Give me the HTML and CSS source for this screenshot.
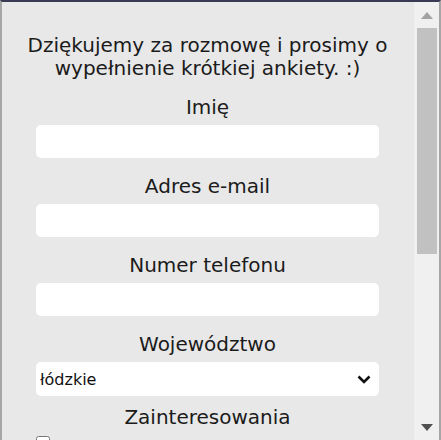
FILE: index.html
```html
<!DOCTYPE html>
<html lang="pl">
<head>
<meta charset="utf-8">
<title>Ankieta</title>
<link rel="stylesheet" href="styles.css">
</head>
<body>
<div class="frame">
  <div class="content">
    <p class="intro">Dziękujemy za rozmowę i prosimy o wypełnienie krótkiej ankiety. :)</p>
    <form class="form">
      <label class="label" for="imie">Imię</label>
      <input class="field" id="imie" type="text">
      <label class="label" for="email">Adres e-mail</label>
      <input class="field" id="email" type="email">
      <label class="label" for="tel">Numer telefonu</label>
      <input class="field" id="tel" type="tel">
      <label class="label" for="woj">Województwo</label>
      <div class="select-wrap">
        <select class="select" id="woj">
          <option>łódzkie</option>
        </select>
        <svg class="chevron" width="14" height="9" viewBox="0 0 14 9"><path d="M1.5 1.5 L7 7 L12.5 1.5" fill="none" stroke="#111" stroke-width="2.6"/></svg>
      </div>
      <div class="label label-group">Zainteresowania</div>
      <div class="checks">
        <input type="checkbox" class="box" aria-label="Sport">
      </div>
    </form>
  </div>
  <div class="scrollbar">
    <div class="sb-btn">
      <svg width="12" height="7" viewBox="0 0 12 7"><path d="M0 7 L6 0 L12 7 Z" fill="#a3a3a3"/></svg>
    </div>
    <div class="sb-thumb"></div>
    <div class="sb-track"></div>
    <div class="sb-btn">
      <svg width="12" height="7" viewBox="0 0 12 7"><path d="M0 0 L12 0 L6 7 Z" fill="#505050"/></svg>
    </div>
  </div>
</div>
</body>
</html>
```
FILE: styles.css
```css
html, body {
  margin: 0;
  padding: 0;
}
body {
  width: 441px;
  height: 440px;
  overflow: hidden;
  background: #e8e8e8;
  font-family: "DejaVu Sans", Verdana, sans-serif;
  color: #1b1b1b;
}
.frame {
  box-sizing: border-box;
  width: 441px;
  height: 440px;
  display: flex;
  border-top: 2px solid #3a3a55;
  border-left: 2px solid #a6a6a6;
  border-right: 2px solid #a6a6a6;
  background: #e8e8e8;
}
.content {
  flex: 1;
  overflow: hidden;
  text-align: center;
}
.intro {
  margin: 32px 0 0;
  font-size: 20px;
  line-height: 23px;
}
.form {
  display: flex;
  flex-direction: column;
  align-items: center;
  margin-top: 16px;
}
.label {
  display: block;
  font-size: 20px;
  line-height: 23px;
  margin-bottom: 6px;
}
.field {
  box-sizing: border-box;
  width: 343px;
  height: 33px;
  border: none;
  border-radius: 5px;
  background: #fff;
  margin: 0 0 17px;
  padding: 0 8px;
  font: 16px "DejaVu Sans", sans-serif;
}
.select-wrap {
  position: relative;
  width: 343px;
  height: 34px;
  margin-bottom: 10px;
}
.select {
  box-sizing: border-box;
  width: 100%;
  height: 100%;
  border: none;
  border-radius: 5px;
  background: #fff;
  appearance: none;
  -webkit-appearance: none;
  padding: 0 0 0 4px;
  font: 16px "DejaVu Sans", sans-serif;
  color: #111;
}
.chevron {
  position: absolute;
  right: 8px;
  top: 13px;
  pointer-events: none;
}
.label-group {
  margin-bottom: 7px;
}
.checks {
  width: 343px;
  text-align: left;
  line-height: 0;
}
.box {
  margin: 0;
  width: 14px;
  height: 14px;
}
.scrollbar {
  width: 25px;
  flex: none;
  display: flex;
  flex-direction: column;
  background: #f0f0f0;
  border-left: 1px solid #e6e6e6;
}
.sb-btn {
  height: 26px;
  display: flex;
  align-items: center;
  justify-content: center;
  flex: none;
}
.sb-thumb {
  height: 226px;
  margin: 0 2px 0 3px;
  background: #c1c1c1;
  flex: none;
}
.sb-track {
  flex: 1;
}
```
